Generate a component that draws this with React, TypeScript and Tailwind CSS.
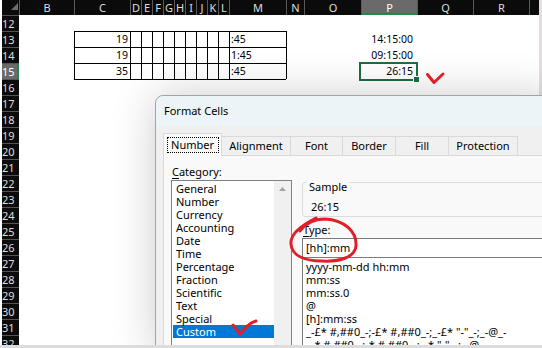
import clsx from 'clsx';

const COLS: { id: string; w: string }[] = [
  { id: 'B', w: 'w-[55px]' },
  { id: 'C', w: 'w-[56px]' },
  { id: 'D', w: 'w-[11px]' },
  { id: 'E', w: 'w-[11px]' },
  { id: 'F', w: 'w-[11px]' },
  { id: 'G', w: 'w-[11px]' },
  { id: 'H', w: 'w-[11px]' },
  { id: 'I', w: 'w-[11px]' },
  { id: 'J', w: 'w-[11px]' },
  { id: 'K', w: 'w-[11px]' },
  { id: 'L', w: 'w-[11px]' },
  { id: 'M', w: 'w-[57px]' },
  { id: 'N', w: 'w-[18px]' },
  { id: 'O', w: 'w-[57px]' },
  { id: 'P', w: 'w-[56px]' },
  { id: 'Q', w: 'w-[56px]' },
  { id: 'R', w: 'w-[56px]' },
];

const TABLE_COLS = ['C', 'D', 'E', 'F', 'G', 'H', 'I', 'J', 'K', 'L', 'M'];

const ROWS = Array.from({ length: 21 }, (_, i) => i + 12);

const CELLS: Record<string, { text: string; className: string }> = {
  C13: { text: '19', className: 'justify-end pr-[2px]' },
  C14: { text: '19', className: 'justify-end pr-[2px]' },
  C15: { text: '35', className: 'justify-end pr-[2px]' },
  M13: { text: ':45', className: 'justify-start pl-px' },
  M14: { text: '1:45', className: 'justify-start pl-px' },
  M15: { text: ':45', className: 'justify-start pl-px' },
  P13: { text: '14:15:00', className: 'justify-end pr-[4px]' },
  P14: { text: '09:15:00', className: 'justify-end pr-[4px]' },
  P15: { text: '26:15', className: 'justify-end pr-[4px]' },
};

const TABS = [
  { label: 'Number', w: 'w-[59px]' },
  { label: 'Alignment', w: 'w-[70px]' },
  { label: 'Font', w: 'w-[53px]' },
  { label: 'Border', w: 'w-[54px]' },
  { label: 'Fill', w: 'w-[54px]' },
  { label: 'Protection', w: 'w-[70px]' },
];

const CATEGORIES = [
  'General',
  'Number',
  'Currency',
  'Accounting',
  'Date',
  'Time',
  'Percentage',
  'Fraction',
  'Scientific',
  'Text',
  'Special',
  'Custom',
];

const TYPES = [
  'yyyy-mm-dd hh:mm',
  'mm:ss',
  'mm:ss.0',
  '@',
  '[h]:mm:ss',
  '_-£* #,##0_-;-£* #,##0_-;_-£* "-"_-;_-@_-',
  '_-* #,##0_-;-* #,##0_-;_-* "-"_-;_-@_-',
];

function cellBorders(col: string, row: number): string {
  const inTable = TABLE_COLS.includes(col);
  const top = inTable && row >= 13 && row <= 16;
  const left = (inTable || col === 'N') && row >= 13 && row <= 15;
  return clsx(top && 'border-t', left && 'border-l', 'border-black');
}

function SheetHeader() {
  return (
    <div className="flex h-[22px] items-end bg-[#0b0b0b]">
      <div className="relative h-[15px] w-[17px]">
        <svg className="absolute left-[9px] top-[3px]" width="7" height="7" viewBox="0 0 7 7">
          <path d="M7 0 L7 7 L0 7 Z" fill="#6e6e6e" />
        </svg>
      </div>
      {COLS.map((c) => (
        <div
          key={c.id}
          className={clsx(
            c.w,
            'h-[15px] border-l border-[#595959] text-center text-[11px] leading-[15px]',
            c.id === 'P' ? 'border-b-2 border-b-[#1f8a4c] bg-[#6a6a6a] text-white' : 'text-[#dedede]',
          )}
        >
          {c.id}
        </div>
      ))}
      <div className="h-[15px] w-[10px] border-l border-[#595959]" />
    </div>
  );
}

function SheetRow({ row }: { row: number }) {
  return (
    <div className="flex h-[16px] shrink-0">
      <div
        className={clsx(
          'h-[16px] w-[17px] border-t border-[#545454] text-[11px] leading-[15px]',
          row === 15 ? 'border-r-2 border-r-[#1f8a4c] bg-[#6a6a6a] text-white' : 'bg-[#0b0b0b] text-[#dedede]',
        )}
      >
        {row}
      </div>
      {COLS.map((c) => {
        const cell = CELLS[`${c.id}${row}`];
        return (
          <div key={c.id} className={clsx(c.w, 'relative flex h-[16px] items-center', cellBorders(c.id, row), cell?.className)}>
            {cell && <span className="text-[10.5px] leading-[15px] text-black">{cell.text}</span>}
            {c.id === 'P' && row === 15 && (
              <>
                <div className="absolute -left-[2px] -top-[1px] h-[19px] w-[59px] border-2 border-[#1e6e42]" />
                <div className="absolute left-[53px] top-[14px] h-[5px] w-[5px] bg-[#1e6e42] ring-1 ring-white" />
              </>
            )}
          </div>
        );
      })}
      <div className="w-[10px]" />
    </div>
  );
}

function FormatCellsDialog() {
  return (
    <div className="absolute left-[155px] top-[95px] h-[260px] w-[400px] rounded-tl-[8px] border border-[#a3a3a3] bg-[#f0f0f0] text-[11px] text-black shadow-[0_0_44px_rgba(0,0,0,0.2)]">
      <div className="flex h-[30px] items-center rounded-tl-[8px] bg-[#ecf4f7] pl-[8px]">Format Cells</div>
      <div className="pl-[7px] pt-[7px]">
        <div className="flex h-[22px] items-end">
          {TABS.map((t, i) =>
            i === 0 ? (
              <div
                key={t.label}
                className={clsx(t.w, 'relative z-10 -mb-px flex h-[23px] justify-center border border-b-0 border-[#d9d9d9] bg-[#f9f9f9] pt-[3px]')}
              >
                <div className="flex h-[16px] w-[52px] items-center justify-center border border-dotted border-black">
                  {t.label}
                </div>
              </div>
            ) : (
              <div
                key={t.label}
                className={clsx(t.w, '-ml-px flex h-[19px] items-center justify-center border border-b-0 border-[#d9d9d9] bg-[#f0f0f0]')}
              >
                {t.label}
              </div>
            ),
          )}
        </div>
        <div className="flex h-[200px] border border-[#d9d9d9] bg-[#f9f9f9] pl-[7px] pt-[8px]">
          <div>
            <div className="h-[16px] pl-px leading-[15px]">
              <span className="underline underline-offset-2">C</span>ategory:
            </div>
            <div className="flex h-[170px] w-[121px] border border-[#828282] bg-white">
              <div className="w-[102px] pt-px">
                {CATEGORIES.map((c) => (
                  <div
                    key={c}
                    className={clsx(
                      'leading-[13px]',
                      c === 'Custom' ? 'ml-px bg-[#0078d7] pl-[3px] text-white' : 'pl-[4px]',
                    )}
                  >
                    {c}
                  </div>
                ))}
              </div>
              <div className="flex w-[17px] justify-center bg-[#f0f0f0] pt-[6px]">
                <svg width="7" height="4" viewBox="0 0 7 4">
                  <path d="M0 4 L3.5 0 L7 4 Z" fill="#a3a3a3" />
                </svg>
              </div>
            </div>
          </div>
          <div className="ml-[10px] flex-1">
            <fieldset className="mt-[7px] rounded-[3px] border border-[#dcdcdc]">
              <legend className="ml-[4px] px-[2px] pt-[8px] leading-[15px]">Sample</legend>
              <div className="pb-[2px] pl-[8px] pt-[5px] leading-[15px]">26:15</div>
            </fieldset>
            <div className="mt-[5px] h-[16px] pl-px leading-[15px]">
              <span className="underline underline-offset-2">T</span>ype:
            </div>
            <div className="flex h-[20px] items-center border border-[#7a7a7a] bg-white pl-[3px]">[hh]:mm</div>
            <div className="h-[100px] border-x border-[#7a7a7a] bg-white pl-[3px] pt-[2px]">
              {TYPES.map((t) => (
                <div key={t} className="whitespace-pre leading-[13px]">
                  {t}
                </div>
              ))}
            </div>
          </div>
        </div>
      </div>
    </div>
  );
}

function Annotations() {
  return (
    <svg className="pointer-events-none absolute left-0 top-0" width="542" height="345" viewBox="0 0 542 345">
      <g fill="none" stroke="#e21f29" strokeLinecap="round" strokeLinejoin="round">
        <path d="M427.5 74.5 L434 82.5 L443 74" strokeWidth="3" />
        <path
          d="M300 231 C305 224 312 219 325 219 C345 220 357 232 356 246 C355 257 340 262 322 261 C305 261 292 256 291 244 C290 234 300 226 316 218"
          strokeWidth="3"
        />
        <path d="M233 325 C236 328 238 332 240 334 C245 328 249 323 256 321" strokeWidth="3" />
      </g>
    </svg>
  );
}

export default function App() {
  return (
    <div className="flex h-[348px] w-[542px] flex-col overflow-hidden bg-white font-['Noto_Sans',sans-serif]">
      <div className="relative flex h-[345px] overflow-hidden">
        <div className="w-[2px] bg-white" />
        <div className="flex w-[537px] flex-col">
          <SheetHeader />
          {ROWS.map((r) => (
            <SheetRow key={r} row={r} />
          ))}
        </div>
        <div className="w-[3px] bg-[#e4e0e1]" />
        <FormatCellsDialog />
        <Annotations />
      </div>
      <div className="h-[3px] bg-[#dcdcdc]" />
    </div>
  );
}
